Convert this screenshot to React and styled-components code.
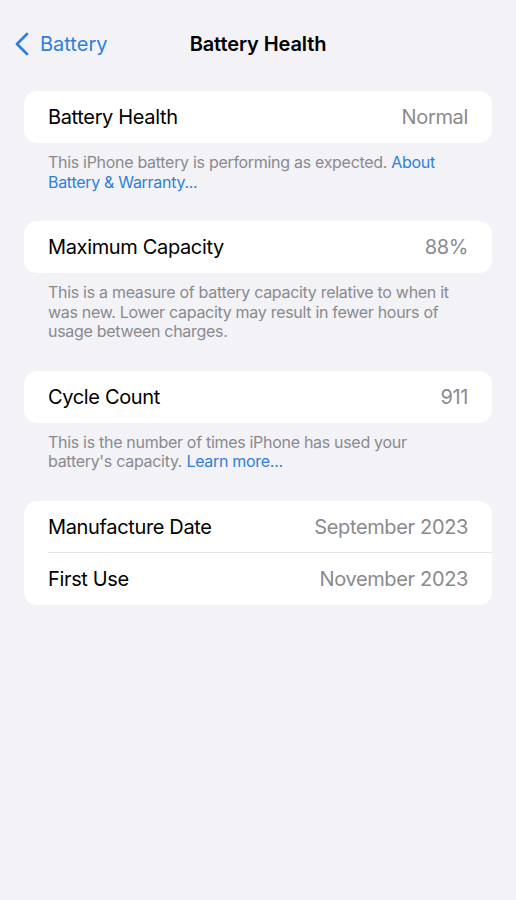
import React from 'react';
import styled, { createGlobalStyle } from 'styled-components';

const GlobalStyle = createGlobalStyle`
  html, body {
    margin: 0;
    padding: 0;
    background: #f2f2f7;
  }
  body {
    font-family: Inter, "Noto Sans", "Liberation Sans", sans-serif;
    -webkit-font-smoothing: antialiased;
  }
`

const Page = styled.div`
  width: 516px;
  min-height: 900px;
  background: #f2f2f7;
  box-sizing: border-box;
`

const NavBar = styled.div`
  position: relative;
  height: 44px;
  padding-top: 22px;
  display: flex;
  align-items: center;
  justify-content: center;
`

const BackButton = styled.div`
  position: absolute;
  left: 14px;
  top: 22px;
  height: 44px;
  display: flex;
  align-items: center;
  gap: 10px;
  color: #2f7fdb;
  font-size: 20px;
`

const Title = styled.div`
  font-size: 20px;
  font-weight: 600;
  color: #000;
  letter-spacing: -0.1px;
`

const Content = styled.div`
  padding: 25px 24px 0;
  display: flex;
  flex-direction: column;
`

const Section = styled.div`
  margin-bottom: ${p => p.$last ? 0 : 29}px;
`

const Card = styled.div`
  background: #fff;
  border-radius: 13px;
  overflow: hidden;
`

const Row = styled.div`
  height: 52px;
  display: flex;
  align-items: center;
  justify-content: space-between;
  padding: 0 24px;
  font-size: 20px;
  letter-spacing: -0.35px;
  position: relative;
  ${p => p.$divider && `
    &::after {
      content: '';
      position: absolute;
      left: 24px;
      right: 0;
      bottom: 0;
      height: 1px;
      background: #e3e3e8;
    }
  `}
`

const Label = styled.span`
  color: #000;
`

const Value = styled.span`
  color: #8a8a8e;
`

const Footer = styled.p`
  margin: 10px 0 0;
  padding: 0 24px;
  font-size: 16px;
  line-height: 19.5px;
  color: #8a8a8e;
  letter-spacing: -0.3px;
`

const Link = styled.span`
  color: #2f7fdb;
`

const Chevron = () => (
  <svg width="16" height="24" viewBox="0 0 16 24" fill="none">
    <path d="M13 2 L3 12 L13 22" stroke="#2f7fdb" strokeWidth="2.8" strokeLinecap="round" strokeLinejoin="round" />
  </svg>
)

export default function App() {
  return (
    <Page>
      <GlobalStyle />
      <NavBar>
        <BackButton>
          <Chevron />
          <span>Battery</span>
        </BackButton>
        <Title>Battery Health</Title>
      </NavBar>
      <Content>
        <Section>
          <Card>
            <Row><Label>Battery Health</Label><Value>Normal</Value></Row>
          </Card>
          <Footer>
            This iPhone battery is performing as expected. <Link>About Battery &amp; Warranty...</Link>
          </Footer>
        </Section>
        <Section>
          <Card>
            <Row><Label>Maximum Capacity</Label><Value>88%</Value></Row>
          </Card>
          <Footer>
            This is a measure of battery capacity relative to when it was new. Lower capacity may result in fewer hours of usage between charges.
          </Footer>
        </Section>
        <Section>
          <Card>
            <Row><Label>Cycle Count</Label><Value>911</Value></Row>
          </Card>
          <Footer>
            This is the number of times iPhone has used your battery's capacity. <Link>Learn more...</Link>
          </Footer>
        </Section>
        <Section $last>
          <Card>
            <Row $divider><Label>Manufacture Date</Label><Value>September 2023</Value></Row>
            <Row><Label>First Use</Label><Value>November 2023</Value></Row>
          </Card>
        </Section>
      </Content>
    </Page>
  );
}
